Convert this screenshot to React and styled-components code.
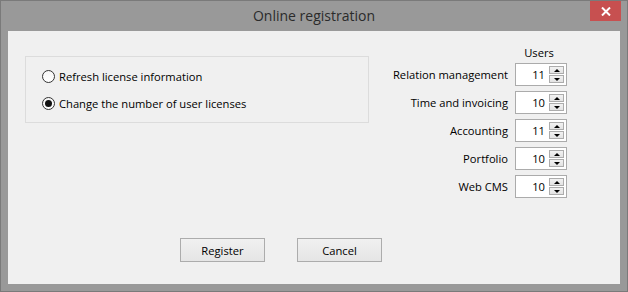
import React from 'react';
import styled, { createGlobalStyle } from 'styled-components';

const GlobalStyle = createGlobalStyle`
  html, body {
    margin: 0;
    padding: 0;
    background: #999999;
  }
  body {
    font-family: "Open Sans", "Noto Sans", sans-serif;
  }
`;

const Window = styled.div`
  width: 628px;
  height: 292px;
  box-sizing: border-box;
  border: 1px solid #7a7a7a;
  background: #999999;
  display: flex;
  flex-direction: column;
`;

const TitleBar = styled.div`
  position: relative;
  height: 30px;
  display: flex;
  align-items: center;
  justify-content: center;
  font-family: "Open Sans", sans-serif;
  font-size: 14px;
  color: #2b2b2b;
  padding-bottom: 2px;
  box-sizing: border-box;
`;

const CloseButton = styled.div`
  position: absolute;
  top: 0;
  right: 6px;
  width: 31px;
  height: 20px;
  background: #c75050;
  color: #ffffff;
  display: flex;
  align-items: center;
  justify-content: center;
`;

const Client = styled.div`
  flex: 1;
  margin: 0 7px 7px 7px;
  background: #f0f0f0;
  display: flex;
  flex-direction: column;
  font-size: 11.2px;
  color: #000;
`;

const TopArea = styled.div`
  display: flex;
  justify-content: space-between;
  align-items: flex-start;
`;

const GroupBox = styled.div`
  margin: 25px 0 0 17px;
  width: 344px;
  height: 67px;
  box-sizing: border-box;
  border: 1px solid #dcdcdc;
  padding: 12px 16px;
  display: flex;
  flex-direction: column;
  gap: 12px;
`;

const RadioRow = styled.label`
  display: flex;
  align-items: center;
  gap: 4px;
  height: 15px;
  line-height: 15px;
  white-space: nowrap;
`;

const RadioCircle = styled.span`
  width: 13px;
  height: 13px;
  box-sizing: border-box;
  border-radius: 50%;
  border: 1px solid #333333;
  background: linear-gradient(#f6f6f6, #ffffff);
  display: flex;
  align-items: center;
  justify-content: center;

  &::after {
    content: "";
    width: 7px;
    height: 7px;
    border-radius: 50%;
    background: ${p => (p.$checked ? '#111111' : 'transparent')};
  }
`;

const UsersPanel = styled.div`
  margin: 14px 53px 0 0;
  display: grid;
  grid-template-columns: auto 52px;
  column-gap: 7px;
  row-gap: 5px;
  align-items: center;
`;

const UsersHeader = styled.div`
  grid-column: 2;
  text-align: center;
  line-height: 15px;
  margin-bottom: -2px;
  padding-right: 4px;
`;

const FieldLabel = styled.div`
  text-align: right;
  white-space: nowrap;
`;

const SpinBox = styled.div`
  height: 23px;
  box-sizing: border-box;
  border: 1px solid #ababab;
  background: #ffffff;
  display: flex;
  align-items: center;
  padding: 2px 2px 2px 0;
`;

const SpinValue = styled.div`
  flex: 1;
  text-align: right;
  padding-right: 4px;
`;

const SpinButtons = styled.div`
  width: 15px;
  height: 100%;
  display: flex;
  flex-direction: column;
  gap: 1px;
`;

const SpinButton = styled.div`
  flex: 1;
  box-sizing: border-box;
  border: 1px solid #acacac;
  background: linear-gradient(#f2f2f2, #e3e3e3);
  display: flex;
  align-items: center;
  justify-content: center;

  &::after {
    content: "";
    width: 0;
    height: 0;
    border-left: 3px solid transparent;
    border-right: 3px solid transparent;
    ${p => (p.$down ? 'border-top: 3px solid #000;' : 'border-bottom: 3px solid #000;')}
  }
`;

const ButtonRow = styled.div`
  margin-top: auto;
  margin-bottom: 22px;
  margin-left: 172px;
  display: flex;
  gap: 32px;
`;

const Button = styled.button`
  width: 85px;
  height: 24px;
  box-sizing: border-box;
  border: 1px solid #acacac;
  background: linear-gradient(#f0f0f0, #e5e5e5);
  font-family: inherit;
  font-size: 11.2px;
  color: #000;
  padding: 0;
`;

const products = [
  { name: 'Relation management', users: 11 },
  { name: 'Time and invoicing', users: 10 },
  { name: 'Accounting', users: 11 },
  { name: 'Portfolio', users: 10 },
  { name: 'Web CMS', users: 10 },
];

export default function App() {
  return (
    <>
      <GlobalStyle />
      <Window>
        <TitleBar>
          Online registration
          <CloseButton>
            <svg width="10" height="9" viewBox="0 0 10 9">
              <path d="M1 0.5 L9 8.5 M9 0.5 L1 8.5" stroke="#fff" strokeWidth="2" />
            </svg>
          </CloseButton>
        </TitleBar>
        <Client>
          <TopArea>
            <GroupBox>
              <RadioRow>
                <RadioCircle />
                Refresh license information
              </RadioRow>
              <RadioRow>
                <RadioCircle $checked />
                Change the number of user licenses
              </RadioRow>
            </GroupBox>
            <UsersPanel>
              <UsersHeader>Users</UsersHeader>
              {products.map(p => (
                <React.Fragment key={p.name}>
                  <FieldLabel>{p.name}</FieldLabel>
                  <SpinBox>
                    <SpinValue>{p.users}</SpinValue>
                    <SpinButtons>
                      <SpinButton />
                      <SpinButton $down />
                    </SpinButtons>
                  </SpinBox>
                </React.Fragment>
              ))}
            </UsersPanel>
          </TopArea>
          <ButtonRow>
            <Button>Register</Button>
            <Button>Cancel</Button>
          </ButtonRow>
        </Client>
      </Window>
    </>
  );
}
